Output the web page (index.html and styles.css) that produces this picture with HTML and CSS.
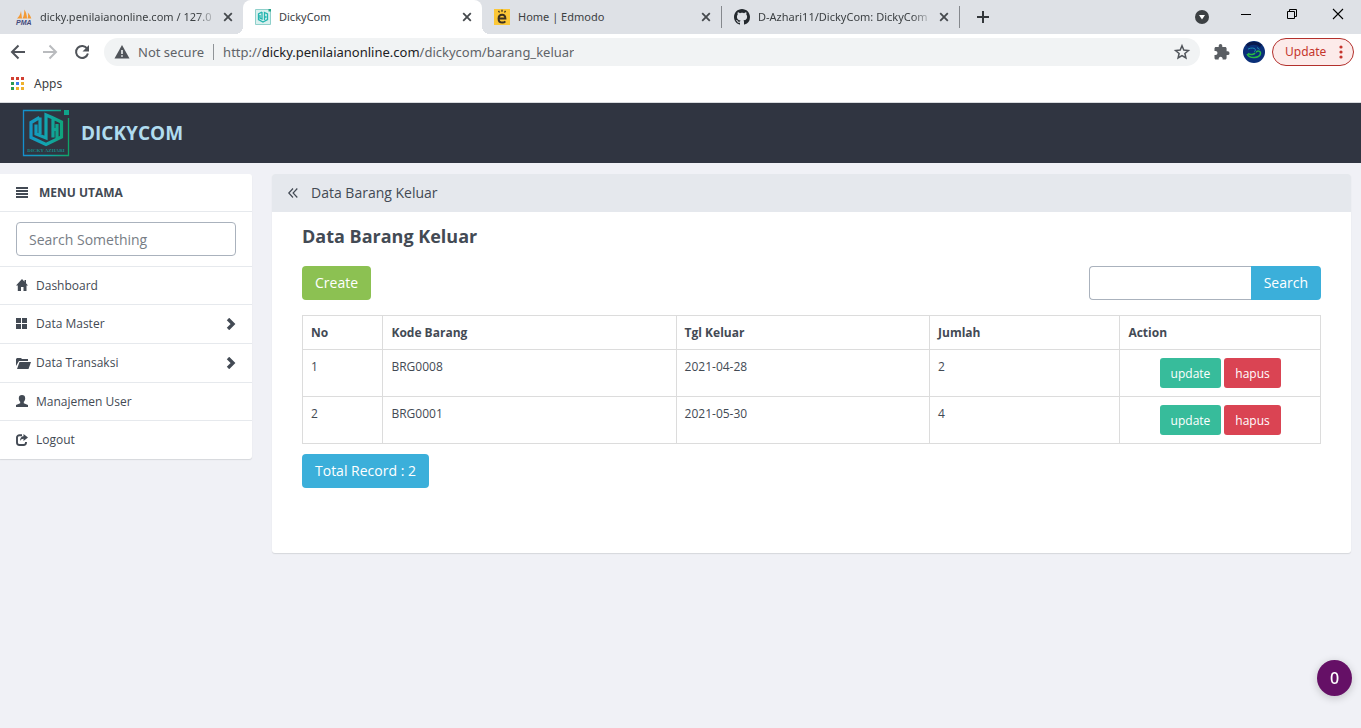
FILE: index.html
```html
<!DOCTYPE html>
<html lang="id">
<head>
<meta charset="utf-8">
<title>DickyCom</title>
<link rel="stylesheet" href="styles.css">
</head>
<body>
<svg class="defs" width="0" height="0" aria-hidden="true">
  <defs>
    <linearGradient id="brand" gradientUnits="userSpaceOnUse" x1="0" y1="24" x2="48" y2="24">
      <stop offset="0" stop-color="#158ed0"/><stop offset="0.5" stop-color="#12a5ae"/><stop offset="1" stop-color="#0fa564"/>
    </linearGradient>
    <symbol id="x" viewBox="0 0 10 10"><path d="M1.2 1.2l7.6 7.6M8.8 1.2L1.2 8.8" stroke="#45494d" stroke-width="1.8"/></symbol>
    <symbol id="chev" viewBox="0 0 10 12"><path d="M2 1l5 5-5 5" fill="none" stroke="#434a54" stroke-width="3.4"/></symbol>
  </defs>
</svg>

<div class="browser">
  <div class="tabstrip">
    <div class="tab">
      <svg class="favicon" viewBox="0 0 16 16"><path d="M1 9.5C3 8 4.500 5 5 2l1 7.500zM6.500 9.500C8 7 8.500 3 8.200 .5c2 2.500 2.800 6 2.800 9zM11.500 9.500c.8-2 .8-4 .2-6 2 2 3 4 3.600 6z" fill="#f39a35"/><text class="pma" x="0" y="16">PMA</text></svg>
      <span class="tab-title fade">dicky.penilaianonline.com / 127.0</span>
      <button class="close" aria-label="Close tab"><svg width="10" height="10"><use href="#x"/></svg></button>
    </div>
    <div class="tab active">
      <svg class="favicon" viewBox="0 0 16 16"><path d="M.5.500h15v15H.500z" fill="#d9f0ee" stroke="#8fd0cb"/><path d="M7 3L3.500 5v5.500L8 13l4.500-2.500V5L9.500 3.500V11M7 3v7L5 9V6M9.500 8h2" fill="none" stroke="#25b5b0" stroke-width="1.300"/><path d="M13.500 0H16v2.500h-2.500z" fill="#27a58a"/></svg>
      <span class="tab-title">DickyCom</span>
      <button class="close" aria-label="Close tab"><svg width="10" height="10"><use href="#x"/></svg></button>
    </div>
    <div class="tab">
      <svg class="favicon" viewBox="0 0 16 16"><path d="M0 0h16v16H0z" fill="#fbc737"/><path d="M4.800 9.600h6.600C11.300 7 10 5.800 8.200 5.800 6 5.800 4.600 7.400 4.600 9.700c0 2.400 1.500 3.900 3.800 3.900 1.200 0 2.200-.4 2.900-1.200" fill="none" stroke="#3b3020" stroke-width="2"/><path d="M4.500 1.800l1 1.700M8 .800v2M11.500 1.800l-1 1.700" stroke="#3b3020" stroke-width="1.300"/></svg>
      <span class="tab-title">Home | Edmodo</span>
      <button class="close" aria-label="Close tab"><svg width="10" height="10"><use href="#x"/></svg></button>
    </div>
    <div class="tab divided">
      <svg class="favicon" viewBox="0 0 16 16"><path fill="#24292e" d="M8 0C3.580 0 0 3.580 0 8c0 3.540 2.290 6.530 5.470 7.590.4.070.55-.17.550-.38 0-.19-.01-.82-.01-1.490-2.010.37-2.530-.49-2.690-.94-.09-.23-.48-.94-.82-1.130-.28-.15-.68-.52-.01-.53.63-.01 1.080.58 1.230.82.720 1.210 1.870.87 2.330.66.070-.52.280-.87.510-1.070-1.780-.2-3.640-.89-3.640-3.950 0-.87.310-1.590.82-2.150-.08-.2-.36-1.020.080-2.120 0 0 .67-.21 2.200.82.640-.18 1.320-.27 2-.27s1.360.09 2 .27c1.530-1.040 2.200-.82 2.200-.82.440 1.100.160 1.920.080 2.120.51.560.82 1.270.82 2.150 0 3.070-1.870 3.750-3.650 3.950.29.250.54.730.54 1.480 0 1.070-.01 1.930-.01 2.200 0 .21.150.46.550.38A8.010 8.010 0 0 0 16 8c0-4.420-3.580-8-8-8z"/></svg>
      <span class="tab-title fade">D-Azhari11/DickyCom: DickyCom</span>
      <button class="close" aria-label="Close tab"><svg width="10" height="10"><use href="#x"/></svg></button>
    </div>
    <button class="newtab" aria-label="New tab"><svg width="12" height="12" viewBox="0 0 12 12"><path d="M6 0v12M0 6h12" stroke="#33373b" stroke-width="2"/></svg></button>
    <div class="window-controls">
      <button aria-label="Search tabs"><svg width="14" height="14" viewBox="0 0 14 14"><circle cx="7" cy="7" r="7" fill="#3c4043"/><path d="M4 5h6l-3 4.500z" fill="#fff"/></svg></button>
      <button class="raised" aria-label="Minimize"><svg width="10" height="10" viewBox="0 0 10 10"><path d="M0 5.500h10" stroke="#000"/></svg></button>
      <button class="raised" aria-label="Restore"><svg width="10" height="10" viewBox="0 0 10 10"><path d="M.5 2.500h7v7h-7zM2.500 2.500v-2h7v7h-2" fill="none" stroke="#000"/></svg></button>
      <button class="raised" aria-label="Close window"><svg width="10" height="10" viewBox="0 0 10 10"><path d="M0 0l10 10M10 0L0 10" stroke="#000" stroke-width="1.100"/></svg></button>
    </div>
  </div>

  <div class="toolbar">
    <button class="nav" aria-label="Back"><svg width="16" height="16" viewBox="0 0 16 16"><path d="M15 8H2M8.500 1.500L2 8l6.500 6.500" fill="none" stroke="#50545a" stroke-width="2"/></svg></button>
    <button class="nav" aria-label="Forward"><svg width="16" height="16" viewBox="0 0 16 16"><path d="M1 8h13M7.500 1.500L14 8l-6.500 6.500" fill="none" stroke="#b9bbbe" stroke-width="2"/></svg></button>
    <button class="nav" aria-label="Reload"><svg width="16" height="16" viewBox="0 0 16 16"><path d="M13.200 4.800A6 6 0 1 0 13.900 9.500" fill="none" stroke="#50545a" stroke-width="2"/><path d="M15 1v6.500H8.500z" fill="#50545a"/></svg></button>
    <div class="omnibox">
      <svg width="16" height="16" viewBox="0 0 16 16"><path d="M8 1l7.500 13.500H.500z" fill="#50545a"/><path d="M8 6v4M8 11.200v1.600" stroke="#f1f3f4" stroke-width="1.600"/></svg>
      <span class="insecure">Not secure</span>
      <span class="url">http://<b>dicky.penilaianonline.com</b>/dickycom/barang_keluar</span>
      <svg class="star" width="16" height="16" viewBox="0 0 16 16"><path d="M8 1.800l1.800 4.300 4.600.4-3.500 3 1 4.500L8 11.600 4.100 14l1-4.500-3.500-3 4.600-.4z" fill="none" stroke="#50545a" stroke-width="1.500"/></svg>
    </div>
    <svg class="puzzle" width="16" height="16" viewBox="0 0 16 16"><path d="M13.700 7.300h-1.100V4.400c0-.8-.7-1.500-1.500-1.500H8.300V1.800a1.800 1.800 0 0 0-3.600 0v1.100H1.900C1.100 2.900.500 3.600.500 4.400v2.700h1a2 2 0 0 1 0 4h-1v2.800c0 .8.600 1.500 1.400 1.500h2.800v-1.100a2 2 0 0 1 3.900 0v1.100h2.500c.8 0 1.500-.7 1.500-1.500V11h1.100a1.850 1.850 0 0 0 0-3.700z" fill="#5a5e63"/></svg>
    <svg class="avatar" width="22" height="22" viewBox="0 0 22 22"><circle cx="11" cy="11" r="11" fill="#0a2f78"/><path d="M4 4.500c4-3 10-3 14 .5" fill="none" stroke="#0a1a4c" stroke-width="3"/><path d="M5 8c3.500-1.500 6-1 7 0s.5 2-1 2.500M14 6.500l2.500 2" stroke="#1d8fae" fill="none"/><path d="M4 13c2.500 5 12.500 4.500 13.500-.5.300-3-3.500-3-4.500-1M5 12.500c2.500 1.500 6 1.200 7-.5" fill="none" stroke="#27b944" stroke-width="1.500"/></svg>
    <button class="update">Update<svg width="4" height="14" viewBox="0 0 4 14"><circle cx="2" cy="2" r="1.600"/><circle cx="2" cy="7" r="1.600"/><circle cx="2" cy="12" r="1.600"/></svg></button>
  </div>

  <div class="bookmarks">
    <a href="#" class="apps"><svg width="13" height="13" viewBox="0 0 13 13"><path d="M0 0h3v3H0zM5 0h3v3H5zM10 0h3v3h-3z" fill="#d23f31"/><path d="M0 5h3v3H0z" fill="#2b9a54"/><path d="M5 5h3v3H5z" fill="#3b7ded"/><path d="M10 5h3v3h-3z" fill="#efb12c"/><path d="M0 10h3v3H0z" fill="#2b9a54"/><path d="M5 10h3v3H5zM10 10h3v3h-3z" fill="#efb12c"/></svg>Apps</a>
  </div>
</div>

<header class="navbar">
  <svg class="logo" width="48" height="48" viewBox="0 0 48 48">
    <path d="M39 1.500H1.500v45h45V9" fill="none" stroke="url(#brand)" stroke-width="1.300"/>
    <path d="M42 1h5v5h-5z" fill="#10a58a"/>
    <g fill="none" stroke="url(#brand)" stroke-width="3.200"><path d="M17.500 8.500L9 13.500v15L24 35.500 39.500 28V13L30 8.500 24 6V29L14 25V15.500M18 8.500V25M31 9.500v19M31 20.500h5.500M35 15v14"/></g>
    <text class="logo-text" x="24" y="43" text-anchor="middle">DICKY AZHARI</text>
  </svg>
  <a href="#" class="brand">DICKYCOM</a>
</header>

<div class="layout">
  <nav class="sidebar">
    <h2 class="side-title"><svg width="12" height="11" viewBox="0 0 12 11"><path d="M0 1h12M0 4h12M0 7h12M0 10h12" stroke="#434a54" stroke-width="1.900"/></svg>MENU UTAMA</h2>
    <div class="side-search"><input type="text" placeholder="Search Something" aria-label="Search Something"></div>
    <a href="#" class="item"><svg width="14" height="14" viewBox="0 0 14 14"><path d="M6 0L0 6.500h1.800V12H5V8h2.500v4h3V6.500H12L10 4.300V1H8.500v1.700z"/></svg>Dashboard</a>
    <a href="#" class="item sub"><svg width="14" height="14" viewBox="0 0 14 14"><path d="M0 1h5v5H0zM6 1h5v5H6zM0 7h5v5H0zM6 7h5v5H6z"/></svg>Data Master<svg class="chev" width="10" height="12"><use href="#chev"/></svg></a>
    <a href="#" class="item sub"><svg width="14" height="14" viewBox="0 0 14 14"><path d="M0 10V3l1-1h4l1 1h6v2H3zM3.500 6H15l-2.500 7H1z"/></svg>Data Transaksi<svg class="chev" width="10" height="12"><use href="#chev"/></svg></a>
    <a href="#" class="item"><svg width="14" height="14" viewBox="0 0 14 14"><path d="M6 0c2 0 3.200 1.200 3.200 3.200 0 1.500-.6 2.800-1.400 3.600v1.400L12 10v2H0v-2l4.200-1.800V6.800C3.400 6 2.800 4.700 2.800 3.200 2.800 1.200 4 0 6 0z"/></svg>Manajemen User</a>
    <a href="#" class="item"><svg width="14" height="14" viewBox="0 0 14 14"><path d="M6 2.200H3.500C2 2.200 1 3.200 1 4.500v5C1 11 2 12 3.500 12h4c1.500 0 2.500-1 2.500-2.500V9" fill="none" stroke="#434a54" stroke-width="1.900"/><path d="M7.500 1l4.500 3.500L7.500 8V5.800C6 5.800 5 6.500 4 8c0-3 1.500-4.700 3.500-4.800z"/></svg>Logout</a>
  </nav>

  <main class="panel">
    <div class="panel-head"><svg width="10" height="10" viewBox="0 0 10 10"><path d="M5 .5L.800 5 5 9.500M9.300.5L5.100 5l4.200 4.500" fill="none" stroke="#434a54" stroke-width="1.200"/></svg>Data Barang Keluar</div>
    <div class="panel-body">
      <h1>Data Barang Keluar</h1>
      <div class="actions">
        <button class="btn green">Create</button>
        <form class="search" onsubmit="return false"><input type="text" aria-label="Search"><button class="btn blue">Search</button></form>
      </div>
      <table>
        <colgroup><col class="c-no"><col class="c-code"><col class="c-date"><col class="c-qty"><col></colgroup>
        <thead><tr><th>No</th><th>Kode Barang</th><th>Tgl Keluar</th><th>Jumlah</th><th>Action</th></tr></thead>
        <tbody>
          <tr><td>1</td><td>BRG0008</td><td>2021-04-28</td><td>2</td><td><div class="row-actions"><button class="btn small teal">update</button><button class="btn small red">hapus</button></div></td></tr>
          <tr><td>2</td><td>BRG0001</td><td>2021-05-30</td><td>4</td><td><div class="row-actions"><button class="btn small teal">update</button><button class="btn small red">hapus</button></div></td></tr>
        </tbody>
      </table>
      <button class="btn blue">Total Record : 2</button>
    </div>
  </main>
</div>
<button class="counter">0</button>
</body>
</html>
```
FILE: styles.css
```css
* { box-sizing: border-box; }
body {
  margin: 0;
  min-height: 100vh;
  background: #f0f1f6;
  color: #434a54;
  font: 12px/18px "Open Sans", sans-serif;
}
button, input { font: inherit; color: inherit; }
button { border: 0; padding: 0; background: none; }
a { color: inherit; text-decoration: none; }
svg { display: block; flex: none; overflow: visible; }
.defs { position: absolute; }

/* Browser frame */
.browser { background: #fff; border-bottom: 1px solid #d8dade; color: #3c4043; font-family: "Noto Sans", sans-serif; }
.tabstrip { display: flex; height: 34px; padding-left: 4px; background: #dee1e6; }
.tab {
  position: relative;
  display: flex;
  align-items: center;
  gap: 8px;
  flex: 0 1 239px;
  min-width: 0;
  padding: 0 10px 0 12px;
}
.tab.active { background: #fff; border-radius: 8px 8px 0 0; }
.tab.active::before, .tab.active::after {
  content: "";
  position: absolute;
  bottom: 0;
  width: 8px;
  height: 8px;
}
.tab.active::before { right: 100%; background: radial-gradient(circle at 0 0, #dee1e6 8px, #fff 8px); }
.tab.active::after { left: 100%; background: radial-gradient(circle at 100% 0, #dee1e6 8px, #fff 8px); }
.tab.divided { border: solid #85888d; border-width: 0 1px; border-image: linear-gradient(transparent 7px, #85888d 7px, #85888d 27px, transparent 27px) 1; }
.favicon { width: 16px; height: 16px; }
.pma { font: italic bold 7px "Liberation Sans", sans-serif; fill: #44497c; }
.tab-title { flex: 1; min-width: 0; overflow: hidden; white-space: nowrap; font-size: 11px; }
.fade { -webkit-mask-image: linear-gradient(90deg, #000 88%, transparent); mask-image: linear-gradient(90deg, #000 88%, transparent); }
.close { margin-left: -2px; }
.newtab { padding: 0 17px; }
.window-controls { display: flex; margin-left: auto; }
.window-controls button { display: flex; align-items: center; justify-content: center; width: 46px; }
.window-controls button:first-child { width: 42px; }
.window-controls .raised { height: 28px; }

.toolbar { display: flex; align-items: center; height: 35px; padding: 0 7px 0 2px; }
.nav { display: flex; justify-content: center; width: 32px; }
.omnibox {
  display: flex;
  align-items: center;
  flex: 1;
  min-width: 0;
  height: 28px;
  margin-left: 6px;
  padding: 0 10px;
  border-radius: 14px;
  background: #f1f3f4;
  font-size: 13px;
  color: #5f6368;
}
.insecure { margin-left: 8px; padding-right: 9px; border-right: 1px solid #909498; line-height: 16px; white-space: nowrap; }
.url { margin-left: 9px; white-space: nowrap; overflow: hidden; }
.url b { font-weight: 400; color: #202124; }
.star { margin-left: auto; }
.puzzle { margin-left: 14px; }
.avatar { margin: 0 7px 0 13px; }
.update {
  display: flex;
  align-items: center;
  justify-content: space-between;
  width: 82px;
  height: 28px;
  padding: 0 10px 0 12px;
  border: 1px solid #b3302c;
  border-radius: 14px;
  background: #fcebea;
  color: #c5352c;
}
.update svg { fill: #c5352c; }
.bookmarks { display: flex; align-items: center; height: 33px; padding: 0 11px 4px; }
.apps { display: flex; align-items: center; gap: 10px; }

/* Application header */
.navbar { display: flex; align-items: center; gap: 11px; height: 60px; padding: 0 22px; background: #303541; }
.logo-text { font: bold 5px "Liberation Serif", serif; fill: #168a87; }
.brand { color: #b0dcef; font-size: 19px; font-weight: 700; line-height: 24px; }

.layout { display: flex; align-items: flex-start; gap: 20px; padding: 11px 10px 20px 0; }

/* Side menu */
.sidebar { flex: 0 0 252px; background: #fff; border-radius: 0 3px 3px 0; box-shadow: 0 1px 1px #d5d7dc; }
.side-title { display: flex; align-items: center; gap: 11px; height: 37px; margin: 0; padding: 0 16px; font-size: 12px; font-weight: 700; }
.side-search { padding: 10px 16px; border-top: 1px solid #e6e9ed; }
.side-search input { display: block; width: 100%; }
input { height: 34px; padding: 0 12px; border: 1px solid #aab2bd; border-radius: 4px; background: #fff; font-size: 14px; outline: 0; }
input::placeholder { color: #777d85; opacity: 1; }
.item { display: flex; align-items: center; gap: 6px; height: 38px; padding: 0 16px; border-top: 1px solid #e6e9ed; }
.item.sub, .item:last-child { height: 39px; }
.item svg { fill: #434a54; }
.chev { margin-left: auto; }

/* Content panel */
.panel { flex: 1; min-width: 0; background: #fff; border-radius: 3px; box-shadow: 0 1px 1px #d5d7dc; }
.panel-head { display: flex; align-items: center; gap: 13px; height: 38px; padding: 0 16px; border-radius: 3px 3px 0 0; background: #e5e8ed; font-size: 14px; }
.panel-body { padding: 12px 30px 65px; }
h1 { margin: 0 0 18px; font-size: 18px; line-height: 24px; }
.actions { display: flex; justify-content: space-between; margin-bottom: 15px; }
.btn { height: 34px; padding: 0 13px; border-radius: 4px; color: #fff; font-size: 14px; }
.btn.small { height: 30px; padding: 0 11px; border-radius: 3px; font-size: 12px; }
.green { background: #8cc152; }
.blue { background: #3bafda; }
.teal { background: #37bc9b; }
.red { background: #da4453; }
.search { display: flex; }
.search input { width: 162px; border-right: 0; border-radius: 4px 0 0 4px; }
.search .btn { border-radius: 0 4px 4px 0; }
table { width: 100%; margin-bottom: 10px; border-collapse: collapse; table-layout: fixed; }
th, td { padding: 8px; border: 1px solid #dcdcdc; text-align: left; vertical-align: top; line-height: 17px; }
.c-no { width: 7.9%; }
.c-code { width: 28.8%; }
.c-date { width: 24.9%; }
.c-qty { width: 18.7%; }
.row-actions { display: flex; justify-content: center; gap: 3px; }

.counter {
  position: fixed;
  right: 9px;
  bottom: 32px;
  width: 35px;
  height: 36px;
  border-radius: 50%;
  background: #651066;
  color: #fff;
  font: 500 16px "Noto Sans", sans-serif;
  box-shadow: 0 2px 8px #0003;
}
```
